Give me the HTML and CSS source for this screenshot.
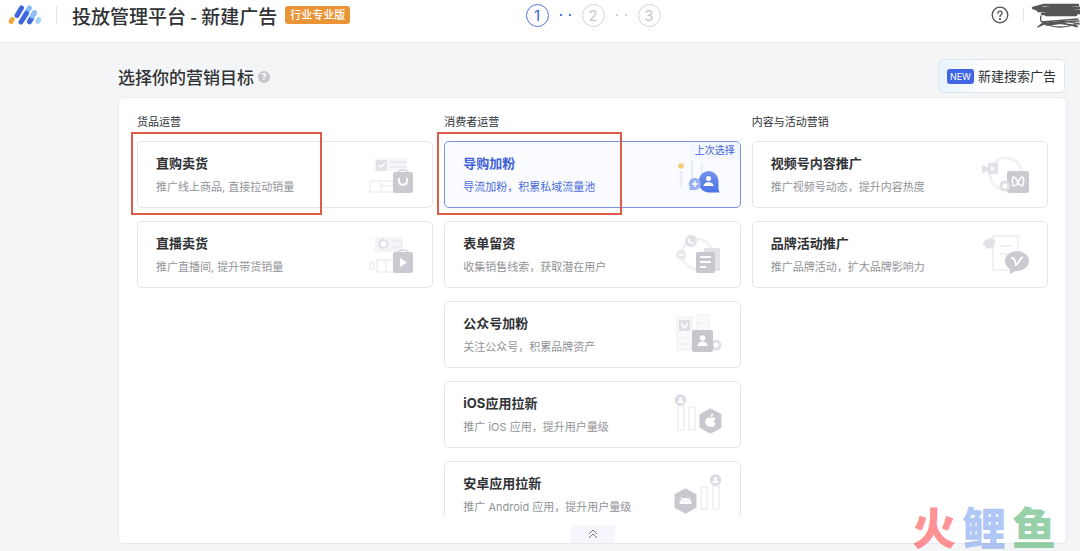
FILE: index.html
```html
<!DOCTYPE html>
<html lang="zh-CN">
<head>
<meta charset="utf-8">
<title>投放管理平台 - 新建广告</title>
<link rel="stylesheet" href="styles.css">
</head>
<body>
<header class="topbar">
  <div class="brand">
    <svg class="logo" width="34" height="20" viewBox="0 0 34 20" fill="none" stroke-linecap="round" stroke-width="5">
      <path d="M26 8.500 22 15.500" stroke="#8dc0f5"/>
      <path d="M30.800 14.500 29.800 16.500" stroke="#a5d2fa"/>
      <path d="M21.500 3 17 10" stroke="#86bdf4"/>
      <path d="M3.200 16.500 4.200 14.500" stroke="#eba83a"/>
      <path d="M13.500 3 9 10.500M18.500 8.500 13 17M23.500 13.500 21.500 16.800" stroke="#4066df"/>
      <path d="M26.500 7.500 24.500 11" stroke="#8dc0f5"/>
    </svg>
    <span class="divider"></span>
    <h1 class="product">投放管理平台 - 新建广告</h1>
    <span class="edition">行业专业版</span>
  </div>
  <ol class="steps">
    <li class="step step-on">1</li>
    <li class="dots dots-on"><i></i><i></i></li>
    <li class="step">2</li>
    <li class="dots"><i></i><i></i></li>
    <li class="step">3</li>
  </ol>
  <div class="account">
    <button class="help" aria-label="帮助">
      <svg width="18" height="18" viewBox="0 0 18 18" fill="none" stroke="#505257" stroke-width="1.300" stroke-linecap="round">
        <circle cx="9" cy="9" r="7.800"/>
        <path d="M6.900 7.300C6.900 4.500 11.200 4.600 11.200 7.100 11.200 8.800 9 8.800 9 10.600"/>
        <circle cx="9" cy="13" r=".4" fill="#505257"/>
      </svg>
    </button>
    <span class="divider"></span>
    <svg class="scribble" width="50" height="29" viewBox="0 0 50 29" fill="none" stroke="#555" stroke-linecap="round" stroke-linejoin="round">
      <path d="M3 7 14 4 48 4 5 8 50 7 8 10 50 10 12 13 50 12 16 14 46 14" stroke-width="2.500"/>
      <path d="M11 15C10 18 11 20 12 21L48 18M8 26C15 18 32 19 49 23M10 25C18 20 32 22 47 25M14 22C23 27 36 27 49 22M19 21C29 23 37 20 49 20M16 24 34 22 47 26" stroke-width="1.300"/>
    </svg>
  </div>
</header>

<main class="page">
  <div class="heading">
    <h2 class="heading-title">选择你的营销目标</h2>
    <button class="hint" aria-label="说明">?</button>
    <button class="search-ad"><span class="new">NEW</span>新建搜索广告</button>
  </div>

  <section class="panel">
    <div class="columns">
      <section class="column">
        <h3 class="column-title">货品运营</h3>
        <button class="card">
          <span class="copy"><strong>直购卖货</strong><span class="desc">推广线上商品, 直接拉动销量</span></span>
          <svg class="art" width="50" height="46" viewBox="0 0 50 46" fill="none">
            <path d="M8 6h33v13H8z" fill="#f5f6f8"/>
            <path d="M24 10h16M24 15h16" stroke="#eaebef" stroke-width="2"/>
            <path d="M10 8h11v11H10z" fill="#e1e2e8"/>
            <path d="m13 13 2 2 4-4" stroke="#fff" stroke-width="1.500"/>
            <path d="M4 29h28v11H4zM15 29v11M15 34h12" stroke="#eeeff3" stroke-width="1.500"/>
            <path d="M32 21c0-4 10-4 10 0" stroke="#d5d7dc" stroke-width="1.500"/>
            <rect x="27" y="20" width="20" height="21" rx="2" fill="#c9cbd1"/>
            <path d="M33 26v3c0 5 8 5 8 0v-3" stroke="#fff" stroke-width="2"/>
          </svg>
          <span class="mark"></span>
        </button>
        <button class="card">
          <span class="copy"><strong>直播卖货</strong><span class="desc">推广直播间, 提升带货销量</span></span>
          <svg class="art" width="50" height="46" viewBox="0 0 50 46" fill="none">
            <path d="M9 5h27v15H9z" fill="#f3f4f7"/>
            <path d="M26 9h10v6H26" stroke="#eaebef" stroke-width="1.500"/>
            <circle cx="17.500" cy="12" r="4" fill="#fff" stroke="#dddfe5" stroke-width="2"/>
            <path d="M11 28h18v12H11zM4 30l4 2v4l-4 2zM20 28v12" stroke="#eeeff3" stroke-width="1.500"/>
            <path d="M32 21c0-4 10-4 10 0" stroke="#d5d7dc" stroke-width="1.500"/>
            <rect x="27" y="20" width="20" height="21" rx="2" fill="#c9cbd1"/>
            <path d="m34 26 7 4.500-7 4.500z" fill="#fff"/>
          </svg>
        </button>
      </section>

      <section class="column">
        <h3 class="column-title">消费者运营</h3>
        <button class="card card-on">
          <span class="copy"><strong>导购加粉</strong><span class="desc">导流加粉，积累私域流量池</span></span>
          <svg class="art" width="50" height="46" viewBox="0 0 50 46" fill="none">
            <defs>
              <linearGradient id="bubble" x1="0" y1="0" x2="0" y2="1"><stop stop-color="#7392ea"/><stop offset="1" stop-color="#4a74e8"/></linearGradient>
            </defs>
            <path d="M7 19v16M18 8v20M28 12v12" stroke="#e8ecf9" stroke-width="2.500"/>
            <circle cx="7" cy="14" r="2.800" fill="#f5cc77"/>
            <path d="M34.500 19a10 10 0 0 1 10 10v8l1 3.500H34.500c-13-1-13-20.500 0-21.500z" fill="url(#bubble)"/>
            <circle cx="34.500" cy="26.500" r="2.500" fill="#fff"/>
            <path d="M29.500 34c0-5 10-5 10 0z" fill="#fff"/>
            <path d="M21 26a6 6 0 0 1 0 12h-6l1-3c-3-4 0-9 5-9z" fill="#98aff0"/>
            <path d="M18 32h6M21 29v6" stroke="#fff" stroke-width="1.500"/>
          </svg>
          <span class="last">上次选择</span>
          <span class="mark"></span>
        </button>
        <button class="card">
          <span class="copy"><strong>表单留资</strong><span class="desc">收集销售线索，获取潜在用户</span></span>
          <svg class="art" width="50" height="46" viewBox="0 0 50 46" fill="none">
            <circle cx="23" cy="22" r="15" stroke="#f1f2f5" stroke-width="3"/>
            <circle cx="17" cy="9" r="6" fill="#e1e2e7"/>
            <path d="M14.500 6.500c0 3 2 5 5 5" stroke="#fff" stroke-width="1.700"/>
            <circle cx="7" cy="23" r="5" fill="#e8e9ed"/>
            <path d="M4.500 23h5" stroke="#fff" stroke-width="1.500"/>
            <rect x="30" y="16" width="16" height="23" rx="1" fill="#e1e2e6"/>
            <rect x="22" y="20" width="19" height="21" rx="2" fill="#c7c9cf"/>
            <path d="M26 25h11M26 30h11M26 35h6" stroke="#fff" stroke-width="1.800"/>
          </svg>
        </button>
        <button class="card">
          <span class="copy"><strong>公众号加粉</strong><span class="desc">关注公众号，积累品牌资产</span></span>
          <svg class="art" width="50" height="46" viewBox="0 0 50 46" fill="none">
            <path d="M3 5h15v33H3zM23 3h12v17H23z" fill="#f8f9fa" stroke="#f1f2f4" stroke-width="1.500"/>
            <path d="M5 26h11M5 32h11M23 11h12" stroke="#eeeff2" stroke-width="1.500"/>
            <path d="M5 8h11v11H5z" fill="#dddfe5"/>
            <path d="M8 11v2l2.500 3 2.500-3v-2" stroke="#fff" stroke-width="1.500"/>
            <circle cx="42" cy="33" r="4" fill="#fff" stroke="#dfe0e6" stroke-width="3"/>
            <rect x="18" y="18" width="21" height="22" rx="2" fill="#c5c7cd"/>
            <circle cx="28.500" cy="26" r="2.800" fill="#fff"/>
            <path d="M23.500 34c0-6 10-6 10 0z" fill="#fff"/>
          </svg>
        </button>
        <button class="card">
          <span class="copy"><strong>iOS应用拉新</strong><span class="desc">推广 iOS 应用，提升用户量级</span></span>
          <svg class="art" width="50" height="46" viewBox="0 0 50 46" fill="none">
            <path d="M4 14h6v24H4zM15 15h6v23h-6z" stroke="#eff0f3" stroke-width="1.700"/>
            <circle cx="6.500" cy="8" r="5.800" fill="#dcdde4"/>
            <circle cx="6.500" cy="6.500" r="1.600" fill="#fff"/><path d="M3.500 11c0-4 6-4 6 0z" fill="#fff"/>
            <path d="m36.500 17.500 10 5.500v12l-10 5.500-10-5.500V23z" fill="#c7c9cf" stroke="#c7c9cf" stroke-width="2" stroke-linejoin="round"/>
            <path d="M36.500 26c2-1 4-1 5 .8-2 1.400-2 3.700.3 4.800-1 2.500-2.500 4-5.300 3-3 1-5.300-2-5.300-5s2.600-4.800 5.300-3.600zM36.500 25c-.2-2 1-3.300 2.800-3.500.1 2-1 3.300-2.800 3.500z" fill="#fff"/>
          </svg>
        </button>
        <button class="card">
          <span class="copy"><strong>安卓应用拉新</strong><span class="desc">推广 Android 应用，提升用户量级</span></span>
          <svg class="art" width="50" height="46" viewBox="0 0 50 46" fill="none">
            <path d="M27 15h6v22h-6zM39 14h6v23h-6z" stroke="#eff0f3" stroke-width="1.700"/>
            <circle cx="41.500" cy="8" r="5.800" fill="#dcdde4"/>
            <circle cx="41.500" cy="6.500" r="1.600" fill="#fff"/><path d="M38.500 11c0-4 6-4 6 0z" fill="#fff"/>
            <path d="m11.500 17.500 10 5.500v12l-10 5.500L1.500 35V23z" fill="#c7c9cf" stroke="#c7c9cf" stroke-width="2" stroke-linejoin="round"/>
            <path d="M5.500 32c0-8 12-8 12 0z" fill="#fff"/>
            <path d="m7 25 1.500 3M16 25l-1.500 3" stroke="#fff"/>
            <circle cx="9" cy="29.500" r=".7" fill="#c7c9cf"/><circle cx="14" cy="29.500" r=".7" fill="#c7c9cf"/>
          </svg>
        </button>
      </section>

      <section class="column">
        <h3 class="column-title">内容与活动营销</h3>
        <button class="card">
          <span class="copy"><strong>视频号内容推广</strong><span class="desc">推广视频号动态，提升内容热度</span></span>
          <svg class="art" width="50" height="46" viewBox="0 0 50 46" fill="none">
            <circle cx="25" cy="22" r="16" stroke="#f1f2f5" stroke-width="3"/>
            <path d="M7 11h10v11H7zM1 13l6 2v4l-6 2z" fill="#e1e2e7"/>
            <path d="m10 14 4 2.500-4 2.500z" fill="#fff"/>
            <rect x="26" y="19" width="22" height="22" rx="2" fill="#c9cbd0"/>
            <path d="M37 31c-1-3-3-6-4.500-6s-1.500 8 .5 9c2 0 3-2 4-3 1 1 2 3 4 3 2-1 2-9 .5-9S38 28 37 31z" stroke="#fff" stroke-width="1.600"/>
            <circle cx="24" cy="34" r="4" fill="#fff" stroke="#dedfe4" stroke-width="3"/>
          </svg>
        </button>
        <button class="card">
          <span class="copy"><strong>品牌活动推广</strong><span class="desc">推广品牌活动，扩大品牌影响力</span></span>
          <svg class="art" width="50" height="46" viewBox="0 0 50 46" fill="none">
            <path d="M12 4h25v34H12z" stroke="#f0f1f4" stroke-width="2"/>
            <path d="M19 14h11M19 22h8" stroke="#eeeff2" stroke-width="2"/>
            <path d="M3 9c2-3 4 0 5-3 3-1 3 2 6 2 1 3-2 4-1 7-2 3-4 0-7 2-3-1 0-4-4-4-1-2 1-2 1-4z" fill="#e2e3e8"/>
            <ellipse cx="36" cy="29" rx="12" ry="10" fill="#c9cbd0"/>
            <path d="m29 36 0 6 8-4z" fill="#c9cbd0"/>
            <path d="M30 26c4-1 4 4 5 7 3-2 4-7 7-8" stroke="#fff" stroke-width="2"/>
          </svg>
        </button>
      </section>
    </div>
    <button class="fold" aria-label="收起">
      <svg width="10" height="10" viewBox="0 0 10 10" fill="none" stroke="#777b84"><path d="m1 5 4-4 4 4M1 9l4-4 4 4"/></svg>
    </button>
  </section>
</main>
<div class="watermark"><span class="wm-red">火</span><span class="wm-blue">鲤</span><span class="wm-green">鱼</span></div>
</body>
</html>
```
FILE: styles.css
```css
* { box-sizing: border-box; }

body {
  margin: 0;
  height: 100vh;
  display: flex;
  flex-direction: column;
  overflow: hidden;
  background: #f4f5f7;
  color: #303236;
  font-family: Inter, "Noto Sans CJK SC", sans-serif;
}

h1, h2, h3, ol { margin: 0; padding: 0; }

button {
  margin: 0;
  padding: 0;
  border: 0;
  background: none;
  color: inherit;
  font: inherit;
  cursor: pointer;
}

svg { display: block; flex: none; }

.topbar {
  display: grid;
  grid-template-columns: 1fr auto 1fr;
  align-items: center;
  padding: 0 0 12px 8px;
  background: #fff;
  border-bottom: 1px solid #ebecee;
}

.brand { display: flex; align-items: center; }
.divider { width: 1px; height: 18px; background: #e4e5e8; }
.brand .divider { margin: 0 15px 0 14px; }

.product {
  padding-top: 2px;
  font-family: "Noto Sans CJK SC", sans-serif;
  font-size: 19px;
  font-weight: 500;
  line-height: 28px;
  white-space: nowrap;
}

.edition {
  margin-left: 8px;
  padding: 0 5px;
  border-radius: 3px;
  background: #e99437;
  color: #fff;
  font-size: 11px;
  font-weight: 500;
  line-height: 18px;
  white-space: nowrap;
}

.steps {
  display: flex;
  align-items: center;
  gap: 11px;
  margin-left: 98px;
  list-style: none;
}

.step {
  width: 23px;
  height: 23px;
  border: 1px solid #d2d3d6;
  border-radius: 50%;
  color: #c6c7cb;
  font-size: 15px;
  line-height: 21px;
  text-align: center;
}

.step-on { border-color: #5574db; color: #3f62d8; }
.dots { display: flex; gap: 7px; color: #d2d3d6; }
.dots-on { color: #5574db; }
.dots i { width: 2px; height: 2px; background: currentColor; }

.account { display: flex; align-items: center; justify-content: flex-end; }
.account .divider { height: 14px; margin: 0 6px 0 14px; }

.page {
  flex: 1;
  min-height: 0;
  display: flex;
  flex-direction: column;
  padding: 16px 13px 7px 118px;
}

.heading { display: flex; align-items: center; margin-bottom: 4px; }

.heading-title {
  padding-top: 3px;
  font-size: 17px;
  font-weight: 500;
  line-height: 24px;
}

.hint {
  width: 12px;
  height: 12px;
  margin: 2px 0 0 4px;
  border-radius: 50%;
  background: #c5c6c9;
  color: #fff;
  font-size: 9px;
  font-weight: 700;
  line-height: 12px;
}

.search-ad {
  display: flex;
  align-items: center;
  gap: 4px;
  margin: 0 2px 0 auto;
  padding: 0 8px;
  border: 1px solid #e0e6ee;
  border-radius: 5px;
  background: linear-gradient(90deg, #e7f2fd, #fff 40%);
  font-size: 13px;
  line-height: 32px;
}

.new {
  padding: 0 3px;
  border-radius: 3px;
  background: #3f65e5;
  color: #fff;
  font-size: 9px;
  line-height: 15px;
}

.panel {
  flex: 1;
  min-height: 0;
  display: flex;
  flex-direction: column;
  border: 1px solid #e9eaed;
  border-radius: 6px;
  background: #fff;
}

.columns {
  flex: 1;
  min-height: 0;
  display: grid;
  grid-template-columns: repeat(3, 1fr);
  gap: 11px;
  padding: 17px 18px 0;
  overflow: hidden;
}

.column { display: flex; flex-direction: column; gap: 13px; }
.column-title { font-size: 11px; font-weight: 400; line-height: 14px; margin-bottom: -1px; }

.card {
  position: relative;
  display: flex;
  align-items: center;
  justify-content: space-between;
  min-height: 67px;
  padding: 9px 16px 9px 18px;
  border: 1px solid #e5e6e9;
  border-radius: 5px;
  text-align: left;
}

.copy { display: flex; flex-direction: column; gap: 4px; padding-top: 1px; }
.copy strong { font-size: 13px; font-weight: 700; line-height: 20px; }
.desc { color: #929498; font-size: 11px; line-height: 20px; }

.card-on { border-color: #7892e4; background: #fafbff; color: #3f62d8; }
.card-on .desc { color: #4d6edb; }

.last {
  position: absolute;
  top: 0;
  right: 0;
  padding: 0 5px;
  border-radius: 0 4px 0 4px;
  background: #f3f6fe;
  font-size: 10px;
  line-height: 17px;
}

.mark {
  position: absolute;
  top: -10px;
  left: -7px;
  width: 191px;
  height: 83px;
  border: 2px solid #e05a48;
  pointer-events: none;
}

.card-on .mark { left: -8px; width: 185px; }

.fold {
  display: flex;
  justify-content: center;
  align-self: center;
  margin-top: 9px;
  padding: 4px 17px;
  background: #f6f7fc;
}

.watermark {
  position: absolute;
  right: 24px;
  bottom: 0;
  display: flex;
  gap: 6px;
  font-family: "Noto Sans CJK SC", sans-serif;
  font-size: 44px;
  font-weight: 900;
  line-height: 50px;
  opacity: 0.6;
  pointer-events: none;
}

.wm-red { color: #ff4a50; }
.wm-blue { color: #7da2ef; }
.wm-green { color: #55b272; }
```
